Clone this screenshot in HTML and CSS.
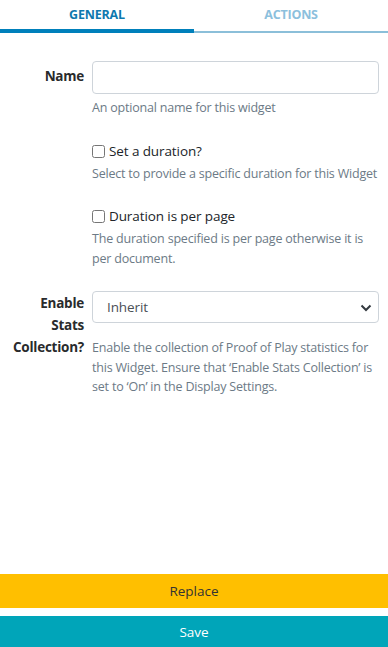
FILE: index.html
```html
<!DOCTYPE html>
<html lang="en">
<head>
<meta charset="UTF-8" />
<meta name="viewport" content="width=device-width, initial-scale=1" />
<title>Widget Edit</title>
<link rel="stylesheet" href="styles.css">
</head>
<body>

  <div class="tabs">
    <div class="tab active">GENERAL</div>
    <div class="tab">ACTIONS</div>
  </div>

  <form class="widget-form">
    <div class="form-row">
      <label class="row-label center" for="name">Name</label>
      <div class="row-field">
        <input type="text" id="name" class="text-input">
        <div class="help">An optional name for this widget</div>
      </div>
    </div>

    <div class="form-row">
      <div></div>
      <div class="row-field">
        <label class="check"><input type="checkbox"> Set a duration?</label>
        <div class="help tight">Select to provide a specific duration for this Widget</div>
      </div>
    </div>

    <div class="form-row">
      <div></div>
      <div class="row-field">
        <label class="check"><input type="checkbox"> Duration is per page</label>
        <div class="help tight">The duration specified is per page otherwise it is per document.</div>
      </div>
    </div>

    <div class="form-row">
      <label class="row-label" for="stats">Enable Stats Collection?</label>
      <div class="row-field">
        <div class="select-wrap">
          <select id="stats" class="select-input">
            <option>Inherit</option>
            <option>On</option>
            <option>Off</option>
          </select>
          <svg class="chevron" width="12" height="8" viewBox="0 0 12 8">
            <path d="M1.5 1.5 L6 6 L10.5 1.5" fill="none" stroke="#343a40" stroke-width="2"/>
          </svg>
        </div>
        <div class="help wide">Enable the collection of Proof of Play statistics for this Widget. Ensure that ‘Enable Stats Collection’ is set to ‘On’ in the Display Settings.</div>
      </div>
    </div>
  </form>

  <div class="actions">
    <button class="btn replace" type="button">Replace</button>
    <button class="btn save" type="button">Save</button>
  </div>

</body>
</html>
```

FILE: styles.css
```css
body, html {
  margin: 0; padding: 0; height: 100%;
}
body {
  font-family: "Open Sans", "Noto Sans", sans-serif;
  font-size: 13px;
  color: #212529;
  background: #fff;
  display: flex;
  flex-direction: column;
}

.tabs {
  display: flex;
  height: 31px;
  border-bottom: 2px solid #8bbfd9;
}
.tab {
  flex: 1;
  text-align: center;
  font-weight: bold;
  font-size: 12.5px;
  letter-spacing: -0.2px;
  line-height: 29px;
  color: #8cc0dd;
}
.tab.active {
  color: #0e78ae;
  border-bottom: 4px solid #0080bb;
  margin-bottom: -2px;
}

.widget-form {
  flex: 1;
  padding: 28px 9px 0 0;
}

.form-row {
  display: grid;
  grid-template-columns: 84px 1fr;
  column-gap: 8px;
  margin-bottom: 23px;
}

.row-label {
  padding: 1px 0 0 10px;
  text-align: right;
  font-weight: bold;
  font-size: 13.5px;
  letter-spacing: -0.25px;
  line-height: 22px;
  color: #292b2c;
}
.row-label.center {
  align-self: start;
  padding-top: 4px;
}

.text-input, .select-input {
  box-sizing: border-box;
  width: 100%;
  height: 33px;
  border: 1px solid #ced4da;
  border-radius: 4px;
  font-family: inherit;
  font-size: 13.5px;
  background: #fff;
}

.select-wrap {
  position: relative;
}
.select-input {
  appearance: none;
  -webkit-appearance: none;
  height: 32px;
  padding: 0 30px 0 14px;
  color: #4a4f55;
  letter-spacing: -0.1px;
}
.chevron {
  position: absolute;
  right: 7px;
  top: 13px;
}

.help {
  color: #6c7a86;
  font-size: 12.5px;
  letter-spacing: -0.2px;
  line-height: 19.5px;
  margin-top: 4px;
}
.help.tight {
  margin-top: 2px;
}
.help.wide {
  margin-top: 15px;
}

.check {
  display: flex;
  align-items: center;
  font-size: 13.5px;
  letter-spacing: -0.1px;
  line-height: 21px;
  color: #212529;
}
.check input {
  margin: 0 4px 0 0;
  width: 13px;
  height: 13px;
}

.actions {
  display: flex;
  flex-direction: column;
  gap: 8px;
}
.btn {
  border: none;
  border-radius: 0;
  font-family: inherit;
  font-size: 13.5px;
  cursor: pointer;
}
.btn.replace {
  height: 34px;
  background-color: #ffbf00;
  color: #333;
}
.btn.save {
  height: 31px;
  background-color: #00a5b9;
  color: #fff;
}
```
